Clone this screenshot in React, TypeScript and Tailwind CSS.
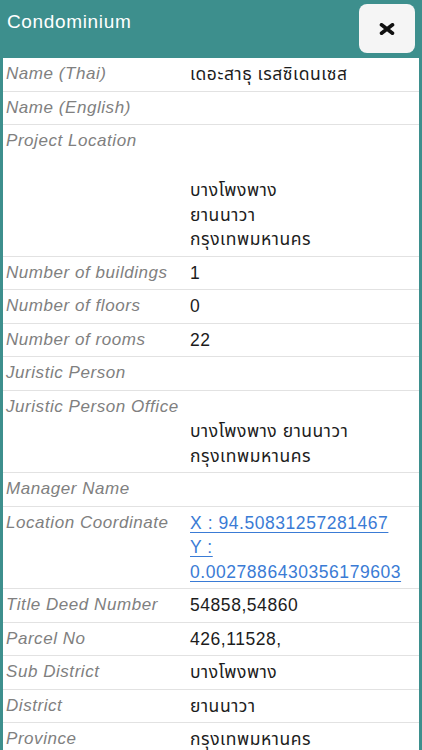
import React from "react";

type Row = {
  label: string;
  lines: string[];
  link?: boolean;
};

const rows: Row[] = [
  { label: "Name (Thai)", lines: ["เดอะสาธุ เรสซิเดนเซส"] },
  { label: "Name (English)", lines: [""] },
  {
    label: "Project Location",
    lines: ["", "", "บางโพงพาง", "ยานนาวา", "กรุงเทพมหานคร"],
  },
  { label: "Number of buildings", lines: ["1"] },
  { label: "Number of floors", lines: ["0"] },
  { label: "Number of rooms", lines: ["22"] },
  { label: "Juristic Person", lines: [""] },
  {
    label: "Juristic Person Office",
    lines: ["", "บางโพงพาง ยานนาวา", "กรุงเทพมหานคร"],
  },
  { label: "Manager Name", lines: [""] },
  {
    label: "Location Coordinate",
    lines: ["X : 94.50831257281467", "Y :", "0.0027886430356179603"],
    link: true,
  },
  { label: "Title Deed Number", lines: ["54858,54860"] },
  { label: "Parcel No", lines: ["426,11528,"] },
  { label: "Sub District", lines: ["บางโพงพาง"] },
  { label: "District", lines: ["ยานนาวา"] },
  { label: "Province", lines: ["กรุงเทพมหานคร"] },
];

function CloseIcon() {
  return (
    <svg width="16" height="12" viewBox="0 0 16 12">
      <path
        d="M2.5 1.8 L13.5 10.2 M13.5 1.8 L2.5 10.2"
        stroke="#111"
        strokeWidth="3.6"
        strokeLinecap="round"
      />
    </svg>
  );
}

export default function App() {
  return (
    <div
      className="h-[750px] w-[422px] overflow-hidden bg-[#3d8f8d]"
      style={{ fontFamily: '"Liberation Sans", "Noto Sans Thai", "Noto Sans", sans-serif' }}
    >
      <div className="flex h-[58px] items-start justify-between">
        <h1 className="pl-[7px] pt-[9px] text-[19px] leading-[26px] tracking-[0.65px] text-white">
          Condominium
        </h1>
        <button className="mr-[7px] mt-[4px] flex h-[49px] w-[56px] items-center justify-center rounded-[8px] bg-[#f5f5f5]">
          <CloseIcon />
        </button>
      </div>
      <div className="mx-[3px] bg-white">
        {rows.map((row) => (
          <div
            key={row.label}
            className="flex border-b border-[#e2e2e2] py-[4px] leading-[24.5px]"
          >
            <div className="w-[187px] shrink-0 pl-[3px] text-[17px] italic tracking-[0.55px] text-[#808080]">
              {row.label}
            </div>
            <div className="min-w-0 flex-1 pr-[2px] text-[17.5px] tracking-[0.55px] text-[#1c1c1c]">
              {row.lines.map((line, i) =>
                row.link ? (
                  <div key={i} className="whitespace-pre">
                    <span className="text-[#3a7bd5] underline underline-offset-[3px]">
                      {line}
                    </span>
                  </div>
                ) : (
                  <div key={i} className="whitespace-pre">
                    {line === "" ? "\u00a0" : line}
                  </div>
                ),
              )}
            </div>
          </div>
        ))}
      </div>
    </div>
  );
}
